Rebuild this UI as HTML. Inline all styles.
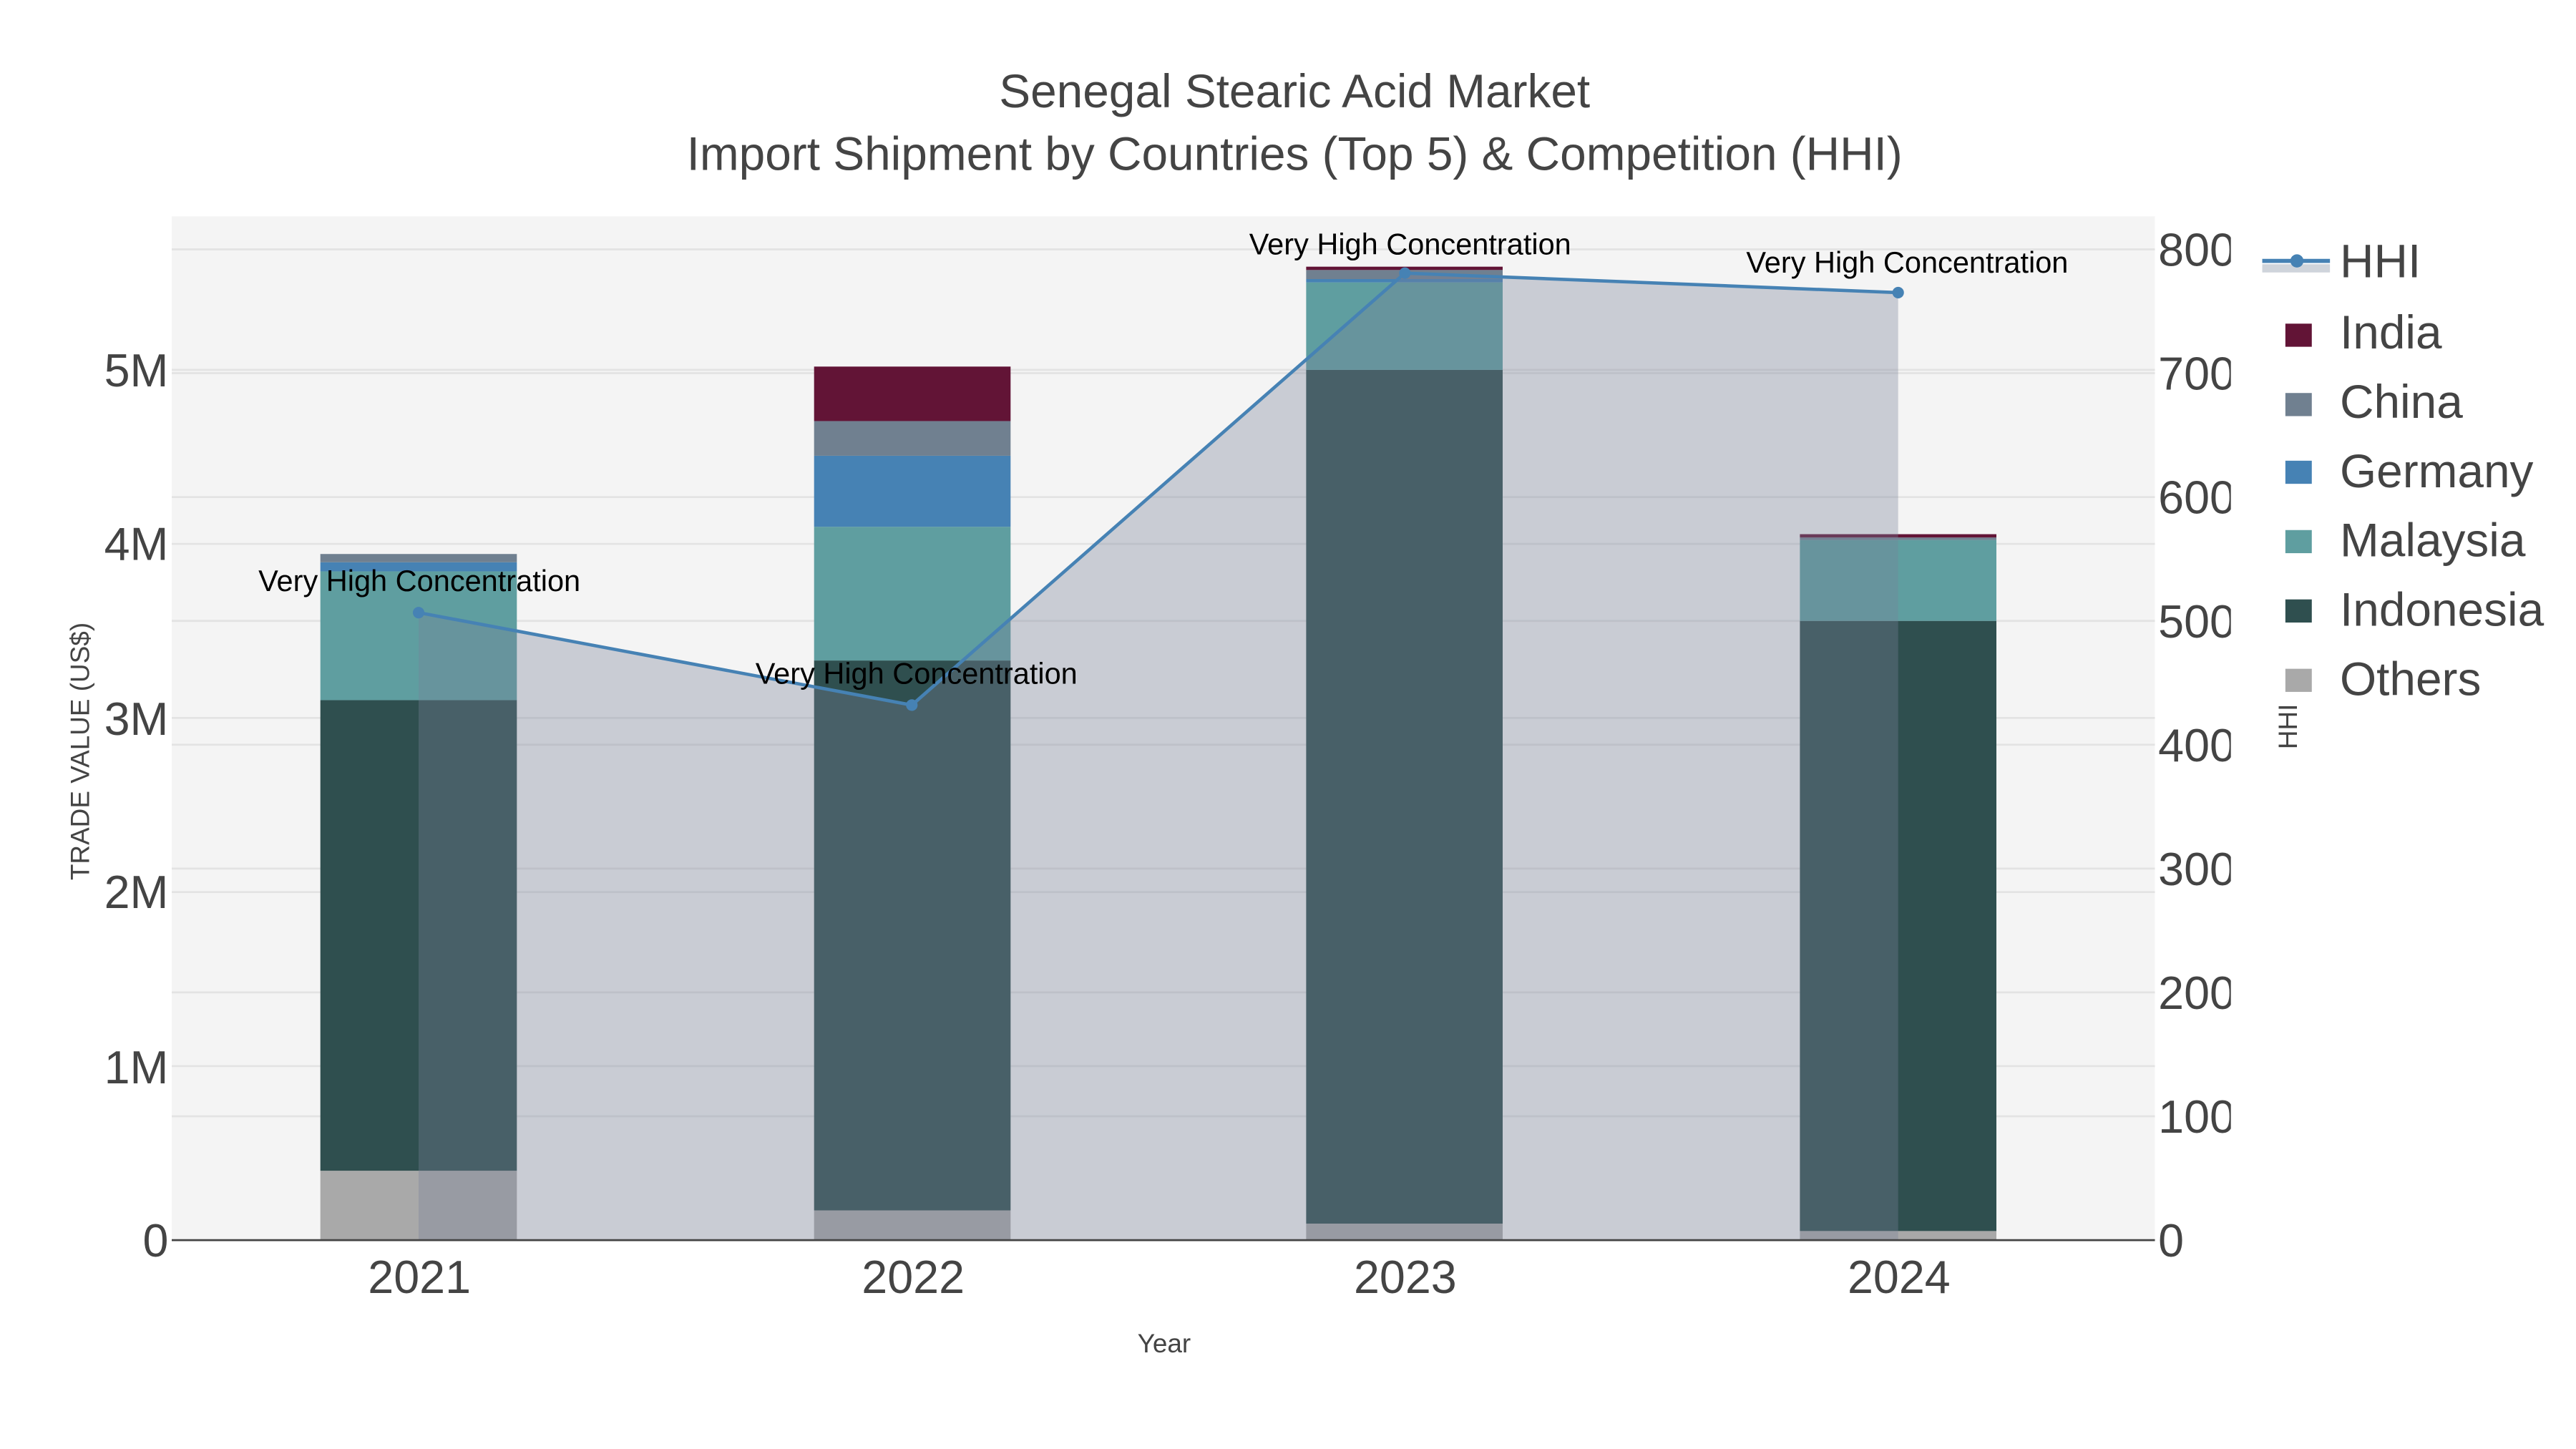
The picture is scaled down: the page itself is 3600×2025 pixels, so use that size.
<!DOCTYPE html>
<html><head><meta charset="utf-8"><style>html,body{margin:0;padding:0;background:#fff}svg{display:block}</style></head>
<body>
<svg width="3600" height="2025" viewBox="0 0 1560 877.5" xmlns="http://www.w3.org/2000/svg" font-family="'Liberation Sans', sans-serif">
<rect width="1560" height="877.5" fill="#fff"/>
<rect x="104" y="131" width="1201" height="620" fill="#f4f4f4"/>
<g stroke="#e3e3e3" stroke-width="1.2">
<line x1="104" x2="1305" y1="645.6" y2="645.6"/><line x1="104" x2="1305" y1="540.2" y2="540.2"/><line x1="104" x2="1305" y1="434.8" y2="434.8"/><line x1="104" x2="1305" y1="329.4" y2="329.4"/><line x1="104" x2="1305" y1="224" y2="224"/>
<line x1="104" x2="1305" y1="676" y2="676"/><line x1="104" x2="1305" y1="601" y2="601"/><line x1="104" x2="1305" y1="526" y2="526"/><line x1="104" x2="1305" y1="451" y2="451"/><line x1="104" x2="1305" y1="376" y2="376"/><line x1="104" x2="1305" y1="301" y2="301"/><line x1="104" x2="1305" y1="226" y2="226"/><line x1="104" x2="1305" y1="151" y2="151"/>
</g>
<rect x="194" y="709" width="119" height="42" fill="#a9a9a9"/>
<rect x="194" y="424" width="119" height="285" fill="#2f4f4f"/>
<rect x="194" y="346" width="119" height="78" fill="#5f9ea0"/>
<rect x="194" y="340.5" width="119" height="5.5" fill="#4682b4"/>
<rect x="194" y="335.5" width="119" height="5" fill="#708090"/>
<rect x="493" y="733" width="119" height="18" fill="#a9a9a9"/>
<rect x="493" y="400" width="119" height="333" fill="#2f4f4f"/>
<rect x="493" y="319" width="119" height="81" fill="#5f9ea0"/>
<rect x="493" y="276" width="119" height="43" fill="#4682b4"/>
<rect x="493" y="255" width="119" height="21" fill="#708090"/>
<rect x="493" y="222" width="119" height="33" fill="#621436"/>
<rect x="791" y="741" width="119" height="10" fill="#a9a9a9"/>
<rect x="791" y="224" width="119" height="517" fill="#2f4f4f"/>
<rect x="791" y="171" width="119" height="53" fill="#5f9ea0"/>
<rect x="791" y="169" width="119" height="2" fill="#4682b4"/>
<rect x="791" y="163.5" width="119" height="5.5" fill="#708090"/>
<rect x="791" y="161.5" width="119" height="2" fill="#621436"/>
<rect x="1090" y="745.5" width="119" height="5.5" fill="#a9a9a9"/>
<rect x="1090" y="376" width="119" height="369.5" fill="#2f4f4f"/>
<rect x="1090" y="327" width="119" height="49" fill="#5f9ea0"/>
<rect x="1090" y="325.5" width="119" height="1.5" fill="#708090"/>
<rect x="1090" y="323.5" width="119" height="2" fill="#621436"/>
<polygon points="253.5,751 253.5,371 552.2,427 850.8,165.4 1149.5,177.2 1149.5,751" fill="rgb(119,128,151)" fill-opacity="0.35"/>
<polyline points="253.5,371 552.2,427 850.8,165.4 1149.5,177.2" fill="none" stroke="#4682b4" stroke-width="2"/>
<g fill="#4682b4"><circle cx="253.5" cy="371" r="3.5"/><circle cx="552.2" cy="427" r="3.5"/><circle cx="850.8" cy="165.4" r="3.5"/><circle cx="1149.5" cy="177.2" r="3.5"/></g>
<line x1="104" x2="1305" y1="751" y2="751" stroke="#444" stroke-width="1.2"/>
<g font-size="18" fill="#000" text-anchor="middle">
<text x="254" y="358">Very High Concentration</text>
<text x="555" y="414">Very High Concentration</text>
<text x="854" y="154">Very High Concentration</text>
<text x="1155" y="165">Very High Concentration</text>
</g>
<g fill="#444" font-size="28" text-anchor="end">
<text x="102" y="761">0</text><text x="102" y="656">1M</text><text x="102" y="550">2M</text><text x="102" y="445">3M</text><text x="102" y="339">4M</text><text x="102" y="234">5M</text>
</g>
<clipPath id="rc"><rect x="1305" y="120" width="46" height="660"/></clipPath>
<g fill="#444" font-size="28" clip-path="url(#rc)">
<text x="1307" y="761">0</text><text x="1307" y="686">1000</text><text x="1307" y="611">2000</text><text x="1307" y="536">3000</text><text x="1307" y="461">4000</text><text x="1307" y="386">5000</text><text x="1307" y="311">6000</text><text x="1307" y="236">7000</text><text x="1307" y="161">8000</text>
</g>
<g fill="#444" font-size="28" text-anchor="middle">
<text x="254" y="783">2021</text><text x="553" y="783">2022</text><text x="851" y="783">2023</text><text x="1150" y="783">2024</text>
</g>
<text x="705" y="819" font-size="16" fill="#444" text-anchor="middle">Year</text>
<text transform="translate(54,455) rotate(-90)" font-size="16" fill="#444" text-anchor="middle">TRADE VALUE (US$)</text>
<text transform="translate(1391,440) rotate(-90)" font-size="16" fill="#444" text-anchor="middle">HHI</text>
<g fill="#444" font-size="28.5" text-anchor="middle">
<text x="784" y="65">Senegal Stearic Acid Market</text>
<text x="784" y="103">Import Shipment by Countries (Top 5) &amp; Competition (HHI)</text>
</g>
<rect x="1370" y="160" width="41" height="5" fill="#cfd4db"/>
<line x1="1370" x2="1411" y1="158" y2="158" stroke="#4682b4" stroke-width="2.5"/>
<circle cx="1391" cy="158" r="4" fill="#4682b4"/>
<rect x="1384" y="196" width="16" height="14" fill="#621436"/>
<rect x="1384" y="238" width="16" height="14" fill="#708090"/>
<rect x="1384" y="279" width="16" height="14" fill="#4682b4"/>
<rect x="1384" y="321" width="16" height="14" fill="#5f9ea0"/>
<rect x="1384" y="363" width="16" height="14" fill="#2f4f4f"/>
<rect x="1384" y="405" width="16" height="14" fill="#a9a9a9"/>
<g fill="#444" font-size="28.5">
<text x="1417" y="168">HHI</text><text x="1417" y="211">India</text><text x="1417" y="253">China</text><text x="1417" y="295">Germany</text><text x="1417" y="337">Malaysia</text><text x="1417" y="379">Indonesia</text><text x="1417" y="421">Others</text>
</g>
</svg>
</body></html>
